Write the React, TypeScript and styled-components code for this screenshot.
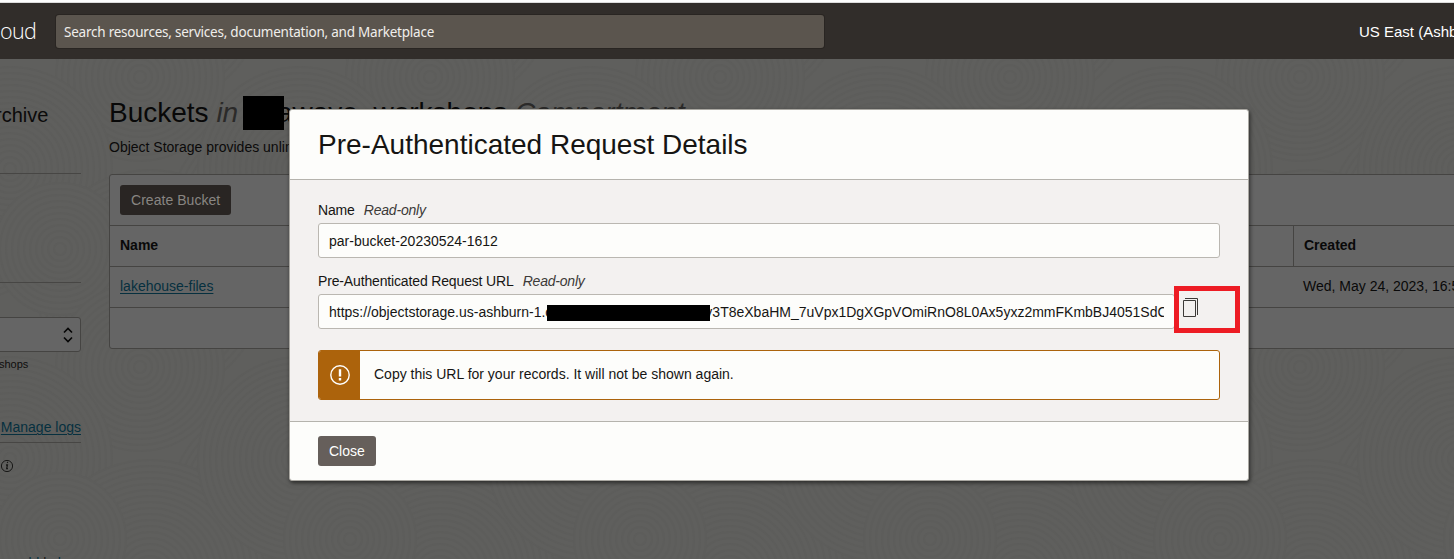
import React from 'react';
import styled, { createGlobalStyle } from 'styled-components';

const Global = createGlobalStyle`
  *, *::before, *::after { box-sizing: border-box; }
  html, body { margin: 0; padding: 0; overflow: hidden; }
  body { font-family: "Liberation Sans", Arial, sans-serif; font-size: 14px; color: #161513; background: #5f5f5d; }
`;

const Page = styled.div`
  position: relative;
  width: 1454px;
  height: 559px;
  overflow: hidden;
  display: flex;
  flex-direction: column;
  background: #5f5f5d;
`;
const TopEdge = styled.div`
  height: 3px;
  flex: none;
  background: #fdfdfd;
  border-bottom: 1px solid #dcdcdc;
`;
const Header = styled.header`
  height: 56px;
  flex: none;
  display: flex;
  align-items: center;
  background: #312d2a;
  color: #fff;
  white-space: nowrap;
`;
const Brand = styled.div`
  width: 56px;
  flex: none;
  padding: 0 0 1px;
  font: 300 21.5px/30px "Open Sans", sans-serif;
  letter-spacing: -0.6px;
`;
const Search = styled.div`
  width: 768px;
  height: 33px;
  flex: none;
  margin-top: 1px;
  padding: 0 8px;
  border-radius: 3px;
  background: #5b554e;
  box-shadow: 0 0 0 1px #292522;
  color: #f0eeeb;
  font: 13.5px/34px "Noto Sans", sans-serif;
  letter-spacing: -0.23px;
`;
const Region = styled.div`
  margin-left: 535px;
  font-size: 15px;
  white-space: nowrap;
`;
const Body = styled.div`
  position: relative;
  flex: 1;
  display: flex;
  gap: 28px;
  min-height: 0;
  white-space: nowrap;
`;
const Texture = styled.svg`
  position: absolute;
  inset: 0;
  width: 1454px;
  height: 500px;
`;
const Sidebar = styled.aside`
  position: relative;
  width: 81px;
  flex: none;
  display: flex;
  flex-direction: column;
  & > * { flex: none; }
`;
const SideHeading = styled.div`
  height: 115px;
  padding-top: 44px;
  border-bottom: 1px solid #474644;
  font-size: 20px;
  line-height: 24px;
  color: #0b0a0a;
  text-indent: -2px;
  margin-left: -3px;
`;
const SideSection = styled.div`
  height: 109px;
  border-bottom: 1px solid #474644;
`;
const Select = styled.div`
  height: 35px;
  margin: 34px 0 0 -4px;
  padding-right: 7px;
  display: flex;
  align-items: center;
  justify-content: flex-end;
  border: 1px solid #454442;
  border-radius: 3px;
  background: #656565;
`;
const SmallText = styled.div`
  margin: 6px 0 0 -1px;
  font-size: 11px;
  line-height: 13px;
  color: #0f0e0d;
`;
const LogsRow = styled.div`
  height: 26px;
  margin-top: 46px;
  border-bottom: 1px solid #474644;
  line-height: 20px;
  text-align: right;
`;
const Link = styled.a`
  color: #06303f;
  text-decoration: underline;
  text-decoration-thickness: 1px;
  text-underline-offset: 2px;
`;
const InfoRow = styled.div`
  height: 14px;
  margin-top: 16px;
  display: flex;
`;
const TagLinks = styled.div`
  margin-top: 80px;
  line-height: 20px;
  text-align: right;
`;
const Main = styled.main`
  position: relative;
  width: 1400px;
  flex: none;
`;
const PageTitle = styled.h1`
  height: 34px;
  margin: 37px 0 0;
  display: flex;
  align-items: center;
  font-size: 28px;
  font-weight: 400;
  color: #080808;
`;
const Muted = styled.i`
  color: #2b2a29;
`;
const Redaction = styled.span<{ $w: number; $h: number; $before: number; $after: number; $drop?: number }>`
  position: relative;
  z-index: 1;
  top: ${(p) => p.$drop ?? 0}px;
  flex: none;
  width: ${(p) => p.$w}px;
  height: ${(p) => p.$h}px;
  margin: 0 ${(p) => -p.$after}px 0 ${(p) => -p.$before}px;
  background: #000;
`;
const Intro = styled.p`
  height: 16px;
  margin: 9px 0 0;
  line-height: 16px;
  color: #0b0a0a;
`;
const Panel = styled.section`
  margin-top: 19px;
  border: 1px solid #454442;
  border-radius: 3px;
  background: #656565;
`;
const Toolbar = styled.div`
  height: 50px;
  padding: 10px;
`;
const Row = styled.div<{ $head?: boolean }>`
  display: flex;
  height: 41px;
  line-height: 38px;
  border-top: 1px solid #454442;
  font-weight: ${(p) => (p.$head ? 700 : 400)};
  color: #090909;
`;
const Cell = styled.div<{ $w: number; $divided?: boolean }>`
  width: ${(p) => p.$w}px;
  padding-left: 10px;
  border-left: ${(p) => (p.$divided ? '1px solid #454442' : '0')};
`;
const Button = styled.button<{ $dim?: boolean }>`
  height: 30px;
  padding: 0 11px;
  border: 0;
  border-radius: 3px;
  font: 14px/30px "Liberation Sans", Arial, sans-serif;
  letter-spacing: ${(p) => (p.$dim ? '0.04px' : '0')};
  background: ${(p) => (p.$dim ? '#292523' : '#665f5b')};
  color: ${(p) => (p.$dim ? '#888582' : '#fff')};
`;
const Dialog = styled.div`
  position: absolute;
  left: 289px;
  top: 109px;
  width: 960px;
  height: 372px;
  display: flex;
  flex-direction: column;
  border: 1px solid #aaa8a2;
  border-radius: 3px;
  background: #fdfdfb;
  box-shadow: 1px 2px 4px rgba(0, 0, 0, 0.55);
  overflow: hidden;
`;
const DialogHeader = styled.h2`
  height: 69px;
  margin: 0;
  padding-left: 28px;
  font-size: 28px;
  line-height: 70px;
  font-weight: 400;
`;
const DialogBody = styled.div`
  height: 243px;
  padding: 21px 28px 0;
  border: solid #b5b3ad;
  border-width: 1px 0;
  background: #f3f1f0;
`;
const Label = styled.div`
  display: flex;
  gap: 9px;
  height: 18px;
  line-height: 18px;
  letter-spacing: -0.15px;
`;
const Hint = styled.i`
  color: #3c3a38;
  letter-spacing: -0.2px;
`;
const Field = styled.div<{ $w: number }>`
  width: ${(p) => p.$w}px;
  height: 35px;
  margin: 4px 0 14px;
  padding: 0 10px;
  display: flex;
  align-items: center;
  border: 1px solid #bab7b1;
  border-radius: 3px;
  background: #fdfdfb;
  white-space: nowrap;
`;
const Clip = styled.span`
  display: flex;
  align-items: center;
  height: 33px;
  overflow: hidden;
`;
const Notice = styled.div`
  height: 50px;
  margin-top: 21px;
  display: flex;
  border: 1px solid #ac630c;
  border-radius: 3px;
  background: #fdfdfb;
  overflow: hidden;
`;
const NoticeIcon = styled.div`
  width: 41px;
  display: flex;
  align-items: center;
  justify-content: center;
  background: #ac630c;
`;
const NoticeText = styled.div`
  padding-left: 14px;
  line-height: 47px;
`;
const DialogFooter = styled.div`
  padding: 14px 28px;
`;
const Highlight = styled.div`
  position: absolute;
  left: 1174px;
  top: 286px;
  width: 66px;
  height: 47px;
  padding: 6px 0 0 4px;
  border: 5px solid #ed1c24;
  background: #f3f1f0;
`;
const CopyIcon = styled.svg`
  display: block;
`;

const TILE = 290;
const ringSets = [
  { cx: 140, cy: 18, n: 14 },
  { cx: 10, cy: 110, n: 17 },
  { cx: 262, cy: 150, n: 15 },
  { cx: 150, cy: 225, n: 19 },
  { cx: 60, cy: 190, n: 11 },
];

function Rings() {
  const groups = [-1, 0, 1].flatMap((row) =>
    [-1, 0, 1, 2, 3, 4, 5].flatMap((col) =>
      ringSets.map((s) => ({ cx: s.cx + col * TILE, cy: s.cy + row * TILE, n: s.n }))
    )
  );
  return (
    <Texture aria-hidden="true" fill="#5f5f5d" stroke="#5d5d5b" strokeWidth="2">
      {groups.map((g) =>
        Array.from({ length: g.n }, (_, k) => (
          <circle key={`${g.cx}-${g.cy}-${k}`} cx={g.cx} cy={g.cy} r={(g.n - k) * 6} />
        ))
      )}
    </Texture>
  );
}

export default function App() {
  return (
    <Page>
      <Global />
      <TopEdge />
      <Header>
        <Brand>oud</Brand>
        <Search>Search resources, services, documentation, and Marketplace</Search>
        <Region>US East (Ashburn)</Region>
      </Header>
      <Body>
        <Rings />
        <Sidebar>
          <SideHeading>rchive</SideHeading>
          <SideSection />
          <Select>
            <svg width="10" height="16" viewBox="0 0 10 16" fill="none" stroke="#050505" strokeWidth="1.6">
              <path d="M1 5.5 5 1.5l4 4M1 10.5l4 4 4-4" />
            </svg>
          </Select>
          <SmallText>shops</SmallText>
          <LogsRow><Link>Manage logs</Link></LogsRow>
          <InfoRow>
            <svg width="14" height="14" viewBox="0 0 14 14" fill="none" stroke="#181817">
              <circle cx="7" cy="7" r="5.6" />
              <path d="M6 6h1.4L6.7 9.6H8" strokeWidth="1.3" />
              <path d="M6.9 3.4h1.2" strokeWidth="1.3" />
            </svg>
          </InfoRow>
          <TagLinks><Link>add</Link> | <Link>clear</Link></TagLinks>
        </Sidebar>
        <Main>
          <PageTitle>
            Buckets&nbsp;<Muted>in</Muted>&nbsp;<Redaction $w={41} $h={34} $before={3} $after={7} />
            awave_workshops&nbsp;<Muted>Compartment</Muted>
          </PageTitle>
          <Intro>Object Storage provides unlimited</Intro>
          <Panel>
            <Toolbar><Button $dim>Create Bucket</Button></Toolbar>
            <Row $head>
              <Cell $w={1183}>Name</Cell>
              <Cell $w={215} $divided>Created</Cell>
            </Row>
            <Row>
              <Cell $w={1183}><Link>lakehouse-files</Link></Cell>
              <Cell $w={215}>Wed, May 24, 2023, 16:55:20 UTC</Cell>
            </Row>
            <Row />
          </Panel>
        </Main>
      </Body>
      <Dialog>
        <DialogHeader>Pre-Authenticated Request Details</DialogHeader>
        <DialogBody>
          <Label>Name <Hint>Read-only</Hint></Label>
          <Field $w={902}>par-bucket-20230524-1612</Field>
          <Label>Pre-Authenticated Request URL <Hint>Read-only</Hint></Label>
          <Field $w={857}>
            <Clip>
              https://objectstorage.us-ashburn-1.c
              <Redaction $w={163} $h={16} $before={5} $after={5} $drop={1} />
              v3T8eXbaHM_7uVpx1DgXGpVOmiRnO8L0Ax5yxz2mmFKmbBJ4051SdC
            </Clip>
          </Field>
          <Notice>
            <NoticeIcon>
              <svg width="20" height="20" viewBox="0 0 20 20" fill="none" stroke="#fff">
                <circle cx="10" cy="10" r="9.2" strokeWidth="1.4" />
                <path d="M10 4.2v7.2M10 13v2.4" strokeWidth="2.4" />
              </svg>
            </NoticeIcon>
            <NoticeText>Copy this URL for your records. It will not be shown again.</NoticeText>
          </Notice>
        </DialogBody>
        <DialogFooter><Button>Close</Button></DialogFooter>
      </Dialog>
      <Highlight>
        <CopyIcon width="16" height="20" viewBox="0 0 16 20" fill="none" stroke="#3c3a38">
          <path d="M.5 3.5h12v16H.5zM2 1.5h12.5V18" />
        </CopyIcon>
      </Highlight>
    </Page>
  );
}
